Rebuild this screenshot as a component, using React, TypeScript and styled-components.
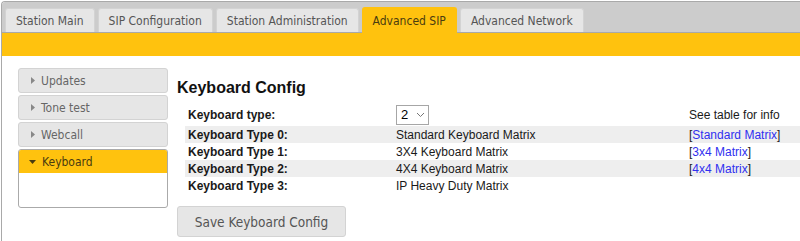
import React from "react";
import styled, { createGlobalStyle } from "styled-components";

const GlobalStyle = createGlobalStyle`
  html, body {
    margin: 0;
    padding: 0;
    background: #fff;
  }
  body {
    font-family: "Liberation Sans", Arial, sans-serif;
    overflow: hidden;
  }
`;

const YELLOW = "#ffc20e";
const UI_FONT = `"DejaVu Sans Condensed", "DejaVu Sans", Verdana, sans-serif`;

const Frame = styled.div`
  margin: 1px 0 0 1px;
  height: 240px;
  border: 1px solid #a9a9a9;
  border-right: none;
  border-bottom: none;
  border-top-left-radius: 4px;
  overflow: hidden;
  box-sizing: border-box;
`;

const TabBar = styled.div`
  display: flex;
  align-items: flex-end;
  gap: 3px;
  height: 30px;
  padding: 0 0 0 3px;
  background: #cccccc;
  border-bottom: 1px solid #a9a9a9;
  box-sizing: content-box;
`;

const Tab = styled.div<{ $active?: boolean }>`
  display: flex;
  align-items: center;
  justify-content: center;
  box-sizing: border-box;
  height: ${(p) => (p.$active ? "26px" : "24px")};
  margin-bottom: ${(p) => (p.$active ? "-1px" : "0")};
  padding: 0 10px;
  background: ${(p) => (p.$active ? YELLOW : "#e6e6e6")};
  border: 1px solid ${(p) => (p.$active ? YELLOW : "#d3d3d3")};
  border-bottom: none;
  border-radius: 3px 3px 0 0;
  color: ${(p) => (p.$active ? "#4a3c10" : "#555")};
  font-family: ${UI_FONT};
  font-size: 12px;
  white-space: nowrap;
`;

const Banner = styled.div`
  height: 23px;
  background: ${YELLOW};
`;

const Body = styled.div`
  display: flex;
  align-items: flex-start;
  gap: 9px;
  padding: 12px 0 0 16px;
`;

const Sidebar = styled.div`
  display: flex;
  flex-direction: column;
  gap: 2px;
  width: 150px;
  flex-shrink: 0;
`;

const MenuItem = styled.div<{ $open?: boolean }>`
  box-sizing: border-box;
  border: 1px solid ${(p) => (p.$open ? "#aaa" : "#d3d3d3")};
  border-radius: 3px;
  background: ${(p) => (p.$open ? "#fff" : "#e6e6e6")};
  overflow: hidden;
`;

const MenuHead = styled.div<{ $open?: boolean }>`
  display: flex;
  align-items: center;
  gap: 6px;
  height: 23px;
  padding-left: ${(p) => (p.$open ? "10px" : "12px")};
  background: ${(p) => (p.$open ? YELLOW : "transparent")};
  color: ${(p) => (p.$open ? "#4a3c10" : "#666")};
  font-family: ${UI_FONT};
  font-size: 12px;
`;

const MenuBodyArea = styled.div`
  height: 34px;
`;

const Arrow = styled.svg`
  flex-shrink: 0;
`;

const Main = styled.div`
  flex: 1;
  padding-top: 11px;
`;

const Heading = styled.h2`
  margin: 0 0 6px 0;
  font-family: "Liberation Sans", Arial, sans-serif;
  font-weight: bold;
  font-size: 16px;
  line-height: 18px;
  color: #111;
`;

const Table = styled.table`
  margin-left: 8px;
  width: 620px;
  border-collapse: collapse;
  font-size: 12px;
  color: #1a1a1a;
  & td {
    padding: 0 3px;
    height: 17px;
    white-space: nowrap;
  }
  & td:nth-child(1) {
    width: 202px;
    font-weight: bold;
  }
  & td:nth-child(2) {
    width: 287px;
  }
`;

const Row = styled.tr<{ $striped?: boolean }>`
  background: ${(p) => (p.$striped ? "#eeeeee" : "transparent")};
`;

const HeaderRow = styled.tr`
  & td {
    height: 23px;
  }
`;

const SelectBox = styled.div`
  display: inline-flex;
  align-items: center;
  gap: 8px;
  box-sizing: border-box;
  height: 20px;
  width: 33px;
  padding-left: 4px;
  border: 1px solid #a6a6a6;
  background: #fff;
  font-size: 13px;
  color: #000;
  vertical-align: middle;
`;

const MatrixLink = styled.a`
  color: #3030f0;
  text-decoration: none;
`;

const SaveButton = styled.button`
  margin-top: 12px;
  width: 169px;
  height: 31px;
  border: 1px solid #d3d3d3;
  border-radius: 3px;
  background: #e6e6e6;
  color: #555;
  font-family: ${UI_FONT};
  font-size: 13.5px;
  padding: 0;
`;

const tabs = [
  "Station Main",
  "SIP Configuration",
  "Station Administration",
  "Advanced SIP",
  "Advanced Network",
];

const menu = ["Updates", "Tone test", "Webcall"];

const rows: { label: string; value: string; link?: string }[] = [
  { label: "Keyboard Type 0:", value: "Standard Keyboard Matrix", link: "Standard Matrix" },
  { label: "Keyboard Type 1:", value: "3X4 Keyboard Matrix", link: "3x4 Matrix" },
  { label: "Keyboard Type 2:", value: "4X4 Keyboard Matrix", link: "4x4 Matrix" },
  { label: "Keyboard Type 3:", value: "IP Heavy Duty Matrix" },
];

const RightArrow = () => (
  <Arrow width="4" height="7" viewBox="0 0 4 7">
    <path d="M0 0 L4 3.5 L0 7 Z" fill="#888" />
  </Arrow>
);

const DownArrow = () => (
  <Arrow width="7" height="4" viewBox="0 0 7 4">
    <path d="M0 0 L7 0 L3.5 4 Z" fill="#4a3c10" />
  </Arrow>
);

const Chevron = () => (
  <svg width="9" height="6" viewBox="0 0 9 6">
    <path d="M1 1 L4.5 4.5 L8 1" fill="none" stroke="#777" strokeWidth="1" />
  </svg>
);

const App = (): JSX.Element => {
  return (
    <>
      <GlobalStyle />
      <Frame>
        <TabBar>
          {tabs.map((t) => (
            <Tab key={t} $active={t === "Advanced SIP"}>
              {t}
            </Tab>
          ))}
        </TabBar>
        <Banner />
        <Body>
          <Sidebar>
            {menu.map((m) => (
              <MenuItem key={m}>
                <MenuHead>
                  <RightArrow />
                  {m}
                </MenuHead>
              </MenuItem>
            ))}
            <MenuItem $open>
              <MenuHead $open>
                <DownArrow />
                Keyboard
              </MenuHead>
              <MenuBodyArea />
            </MenuItem>
          </Sidebar>
          <Main>
            <Heading>Keyboard Config</Heading>
            <Table>
              <tbody>
                <HeaderRow>
                  <td>Keyboard type:</td>
                  <td>
                    <SelectBox>
                      2
                      <Chevron />
                    </SelectBox>
                  </td>
                  <td>See table for info</td>
                </HeaderRow>
                {rows.map((r, i) => (
                  <Row key={r.label} $striped={i % 2 === 0}>
                    <td>{r.label}</td>
                    <td>{r.value}</td>
                    <td>
                      {r.link && (
                        <>
                          [<MatrixLink href="#">{r.link}</MatrixLink>]
                        </>
                      )}
                    </td>
                  </Row>
                ))}
              </tbody>
            </Table>
            <SaveButton>Save Keyboard Config</SaveButton>
          </Main>
        </Body>
      </Frame>
    </>
  );
};

export default App;
